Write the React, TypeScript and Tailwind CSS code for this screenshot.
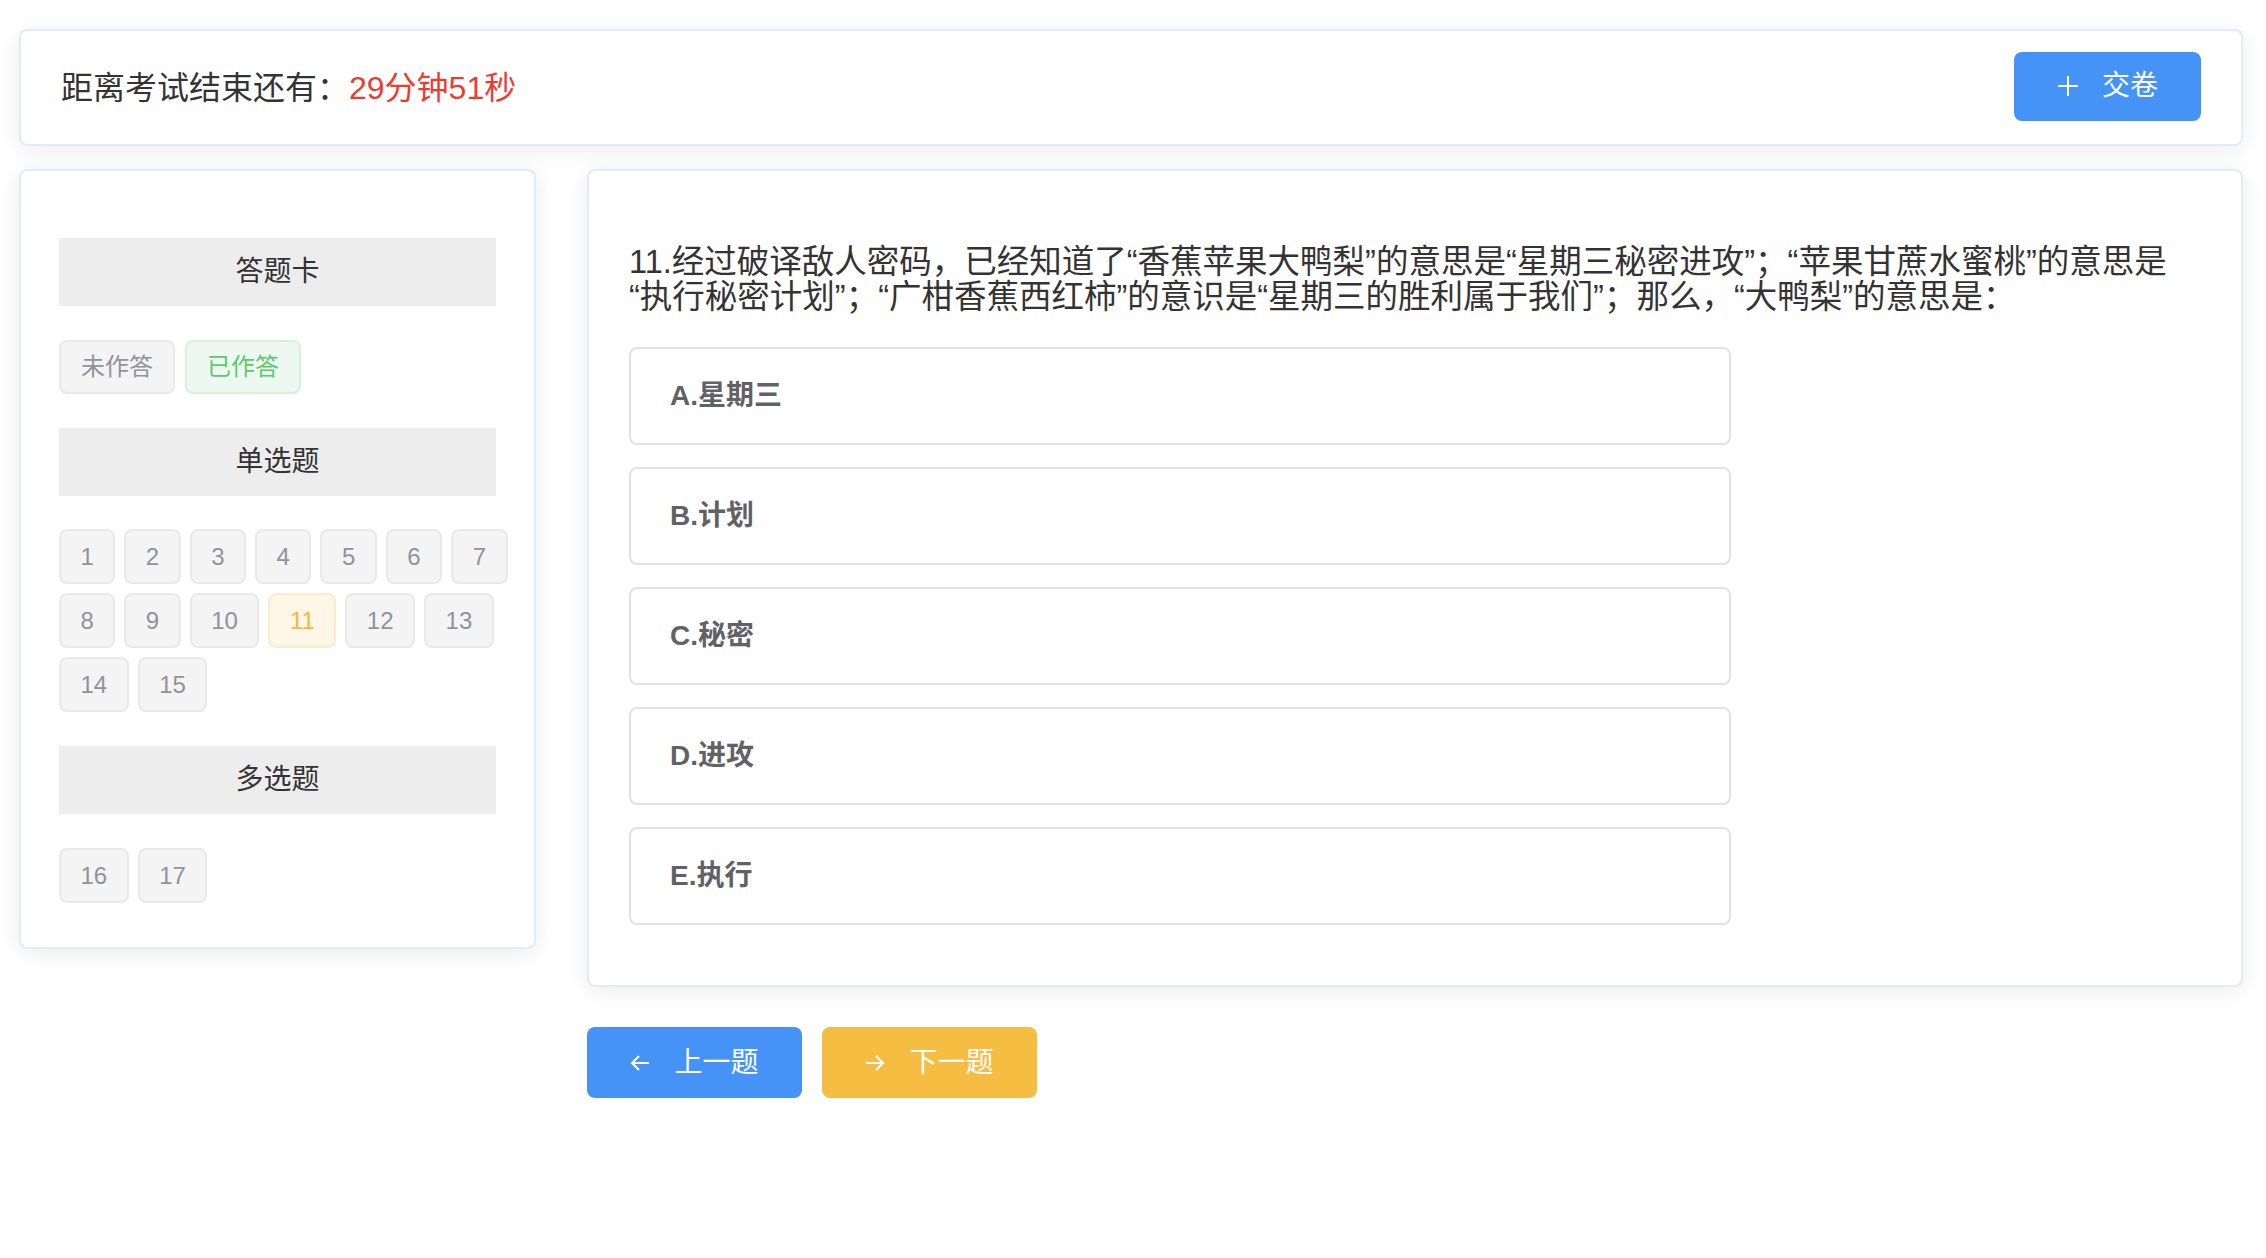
import { useState } from 'react';

const singleChoice = Array.from({ length: 15 }, (_, i) => i + 1);
const multiChoice = [16, 17];

const options = [
  { key: 'A', text: '星期三' },
  { key: 'B', text: '计划' },
  { key: 'C', text: '秘密' },
  { key: 'D', text: '进攻' },
  { key: 'E', text: '执行' },
];

function PlusIcon() {
  return (
    <svg width="22" height="22" viewBox="0 0 22 22" fill="none" stroke="currentColor" strokeWidth="2">
      <path d="M11 1v20M1 11h20" />
    </svg>
  );
}

function ArrowIcon({ dir }: { dir: 'left' | 'right' }) {
  return (
    <svg width="20" height="20" viewBox="0 0 20 20" fill="none" stroke="currentColor" strokeWidth="2">
      {dir === 'left' ? <path d="M19 10H2M9 3l-7 7 7 7" /> : <path d="M1 10h17M11 3l7 7-7 7" />}
    </svg>
  );
}

function SectionTitle({ children }: { children: string }) {
  return (
    <div className="h-[68px] w-full bg-[#ededed] flex items-center justify-center text-[28px] text-[#333]">
      {children}
    </div>
  );
}

function NumTag({ n, current }: { n: number; current: boolean }) {
  return (
    <div
      className={`h-[55px] px-[19.5px] flex items-center justify-center rounded-[8px] border-2 text-[24px] ${
        current
          ? 'bg-[#fef7e8] border-[#fdeccb] text-[#f5b83d]'
          : 'bg-[#f4f4f5] border-[#e9e9eb] text-[#909399]'
      }`}
    >
      {n}
    </div>
  );
}

export default function App() {
  const [current, setCurrent] = useState(11);

  return (
    <div className="min-h-screen bg-white pt-[29px] pl-[19px] pr-[23px] font-['Liberation_Sans','Noto_Sans_CJK_SC',sans-serif]">
      {/* 顶部: 倒计时 + 交卷 */}
      <div className="h-[117px] bg-white border-2 border-[#e6eaf4] rounded-[8px] shadow-[0_4px_24px_rgba(0,0,0,0.08)] flex items-center justify-between pl-[40px] pr-[40px]">
        <div className="text-[32px] text-[#333]">
          距离考试结束还有：<span className="text-[#ee3b30]">29分钟51秒</span>
        </div>
        <button className="h-[69px] px-[43px] mb-[3px] bg-[#4593f7] rounded-[8px] text-white text-[28px] flex items-center gap-[23px]">
          <PlusIcon />
          交卷
        </button>
      </div>

      <div className="flex items-start mt-[23px] gap-[51px]">
        {/* 答题卡 */}
        <div className="w-[517px] shrink-0 bg-white border-2 border-[#e6eaf4] rounded-[8px] shadow-[0_4px_24px_rgba(0,0,0,0.08)] pt-[67px] pb-[44px] px-[38px]">
          <SectionTitle>答题卡</SectionTitle>
          <div className="flex gap-[10px] mt-[34px]">
            <div className="h-[54px] px-[20px] flex items-center rounded-[8px] border-2 border-[#e9e9eb] bg-[#f4f4f5] text-[#909399] text-[24px]">
              未作答
            </div>
            <div className="h-[54px] px-[20px] flex items-center rounded-[8px] border-2 border-[#d5f2dc] bg-[#edf9f0] text-[#5dc96f] text-[24px]">
              已作答
            </div>
          </div>

          <div className="mt-[34px]">
            <SectionTitle>单选题</SectionTitle>
          </div>
          <div className="w-[460px] flex flex-wrap gap-[9px] mt-[33px]">
            {singleChoice.map((n) => (
              <div key={n} onClick={() => setCurrent(n)}>
                <NumTag n={n} current={n === current} />
              </div>
            ))}
          </div>

          <div className="mt-[34px]">
            <SectionTitle>多选题</SectionTitle>
          </div>
          <div className="w-[460px] flex flex-wrap gap-[9px] mt-[34px]">
            {multiChoice.map((n) => (
              <div key={n} onClick={() => setCurrent(n)}>
                <NumTag n={n} current={n === current} />
              </div>
            ))}
          </div>
        </div>

        {/* 题目 */}
        <div className="flex-1 min-w-0">
          <div className="bg-white border-2 border-[#e6eaf4] rounded-[8px] shadow-[0_4px_24px_rgba(0,0,0,0.08)] pt-[74px] pb-[60px] px-[40px]">
            <div className="text-[32.5px] leading-[35px] text-[#333]">
              11.经过破译敌人密码，已经知道了“香蕉苹果大鸭梨”的意思是“星期三秘密进攻”；“苹果甘蔗水蜜桃”的意思是
              <br />
              “执行秘密计划”；“广柑香蕉西红柿”的意识是“星期三的胜利属于我们”；那么，“大鸭梨”的意思是：
            </div>
            <div className="mt-[32px] flex flex-col gap-[22px]">
              {options.map((o) => (
                <div
                  key={o.key}
                  className="w-[1102px] h-[98px] border-2 border-[#dfe2e8] rounded-[8px] flex items-center pl-[39px] text-[28px] font-semibold text-[#606266]"
                >
                  {o.key}.{o.text}
                </div>
              ))}
            </div>
          </div>

          {/* 上一题 / 下一题 */}
          <div className="flex gap-[20px] mt-[40px]">
            <button className="w-[215px] h-[71px] bg-[#4593f7] rounded-[8px] text-white text-[28px] flex items-center justify-center gap-[24px]">
              <ArrowIcon dir="left" />
              上一题
            </button>
            <button className="w-[215px] h-[71px] bg-[#f6bd43] rounded-[8px] text-white text-[28px] flex items-center justify-center gap-[24px]">
              <ArrowIcon dir="right" />
              下一题
            </button>
          </div>
        </div>
      </div>
    </div>
  );
}
